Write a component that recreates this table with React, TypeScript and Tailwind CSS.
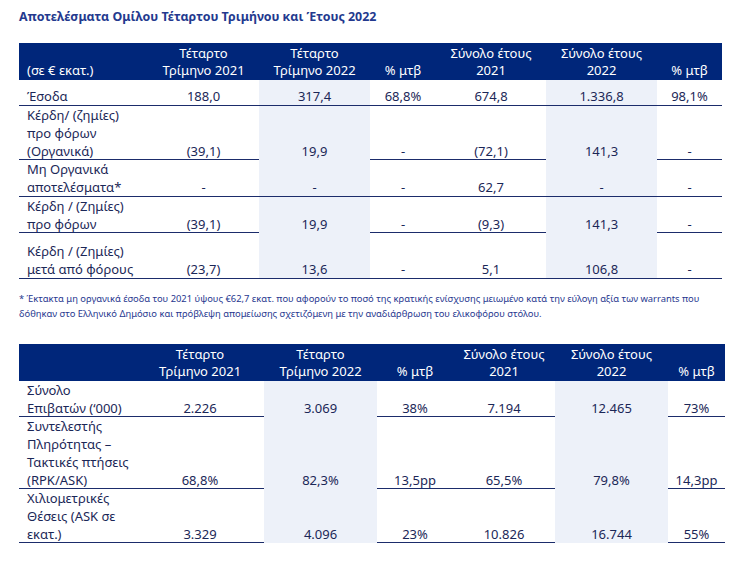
import React from "react";

const T1_COLS = "grid-cols-[129px_111px_111px_66px_110px_111px_65px]";
const T2_COLS = "grid-cols-[117px_128px_113px_76px_102px_113px_57px]";

type Row = { label: React.ReactNode; vals: string[]; h: string };

const t1Rows: Row[] = [
  { label: "Έσοδα", vals: ["188,0", "317,4", "68,8%", "674,8", "1.336,8", "98,1%"], h: "h-[26px]" },
  {
    label: (
      <>
        Κέρδη/ (ζημίες)
        <br />
        προ φόρων
        <br />
        (Οργανικά)
      </>
    ),
    vals: ["(39,1)", "19,9", "-", "(72,1)", "141,3", "-"],
    h: "h-[54px]",
  },
  {
    label: (
      <>
        Μη Οργανικά
        <br />
        αποτελέσματα*
      </>
    ),
    vals: ["-", "-", "-", "62,7", "-", "-"],
    h: "h-[37px]",
  },
  {
    label: (
      <>
        Κέρδη / (Ζημίες)
        <br />
        προ φόρων
      </>
    ),
    vals: ["(39,1)", "19,9", "-", "(9,3)", "141,3", "-"],
    h: "h-[36px]",
  },
  {
    label: (
      <>
        Κέρδη / (Ζημίες)
        <br />
        μετά από φόρους
      </>
    ),
    vals: ["(23,7)", "13,6", "-", "5,1", "106,8", "-"],
    h: "h-[46px]",
  },
];

const t2Rows: Row[] = [
  {
    label: (
      <>
        Σύνολο
        <br />
        Επιβατών (‘000)
      </>
    ),
    vals: ["2.226", "3.069", "38%", "7.194", "12.465", "73%"],
    h: "h-[36px]",
  },
  {
    label: (
      <>
        Συντελεστής
        <br />
        Πληρότητας –
        <br />
        Τακτικές πτήσεις
        <br />
        (RPK/ASK)
      </>
    ),
    vals: ["68,8%", "82,3%", "13,5pp", "65,5%", "79,8%", "14,3pp"],
    h: "h-[72px]",
  },
  {
    label: (
      <>
        Χιλιομετρικές
        <br />
        Θέσεις (ASK σε
        <br />
        εκατ.)
      </>
    ),
    vals: ["3.329", "4.096", "23%", "10.826", "16.744", "55%"],
    h: "h-[54px]",
  },
];

function Header({ cols, first }: { cols: string; first: React.ReactNode }) {
  const heads = [
    ["Τέταρτο", "Τρίμηνο 2021"],
    ["Τέταρτο", "Τρίμηνο 2022"],
    ["", "% μτβ"],
    ["Σύνολο έτους", "2021"],
    ["Σύνολο έτους", "2022"],
    ["", "% μτβ"],
  ];
  return (
    <div className={`grid ${cols} h-[37px] bg-[#00267a] text-white items-end pb-[1px]`}>
      <div className="pl-[8px] leading-[17px]">{first}</div>
      {heads.map((h, i) => (
        <div key={i} className="text-center leading-[17px]">
          {h[0] && <div>{h[0]}</div>}
          <div>{h[1]}</div>
        </div>
      ))}
    </div>
  );
}

function Body({ cols, rows }: { cols: string; rows: Row[] }) {
  return (
    <>
      {rows.map((r, i) => (
        <div key={i} className={`grid ${cols} ${r.h} border-b border-[#1b2c6b]`}>
          <div className="pl-[8px] flex items-end leading-[18px]">
            <div>{r.label}</div>
          </div>
          {r.vals.map((v, j) => (
            <div
              key={j}
              className={`flex items-end justify-center leading-[18px] ${j === 1 || j === 4 ? "bg-[#edf1f9]" : ""}`}
            >
              {v}
            </div>
          ))}
        </div>
      ))}
    </>
  );
}

export default function App() {
  return (
    <div
      className="w-[745px] h-[574px] bg-white text-[#1b2757] text-[13px] overflow-hidden"
      style={{ fontFamily: '"Noto Sans", "Open Sans", sans-serif' }}
    >
      <div className="pl-[19px] pt-[8px] h-[43px]">
        <div className="font-bold text-[12.4px] text-[#23398e] leading-[18px]">
          Αποτελέσματα Ομίλου Τέταρτου Τριμήνου και Έτους 2022
        </div>
      </div>
      <div className="ml-[19px] w-[703px]">
        <Header cols={T1_COLS} first="(σε € εκατ.)" />
        <Body cols={T1_COLS} rows={t1Rows} />
      </div>
      <div className="ml-[19px] mt-[12px] w-[700px] text-[9.4px] leading-[15px] text-[#27378f]">
        * Έκτακτα μη οργανικά έσοδα του 2021 ύψους €62,7 εκατ. που αφορούν το ποσό της κρατικής ενίσχυσης μειωμένο κατά την εύλογη αξία των warrants που
        <br />
        δόθηκαν στο Ελληνικό Δημόσιο και πρόβλεψη απομείωσης σχετιζόμενη με την αναδιάρθρωση του ελικοφόρου στόλου.
      </div>
      <div className="ml-[19px] mt-[23px] w-[706px]">
        <Header cols={T2_COLS} first="" />
        <Body cols={T2_COLS} rows={t2Rows} />
      </div>
    </div>
  );
}
